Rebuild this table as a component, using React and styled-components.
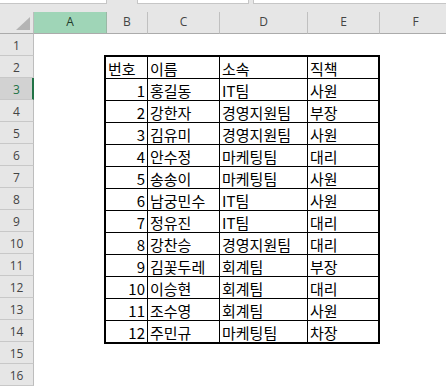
import React from 'react';
import styled, { createGlobalStyle } from 'styled-components';

const GlobalStyle = createGlobalStyle`
  html, body {
    margin: 0;
    padding: 0;
    background: #ffffff;
  }
  body {
    width: 446px;
    height: 386px;
    overflow: hidden;
  }
`;

const columns = [
  { name: 'A', width: 73, selected: true },
  { name: 'B', width: 41 },
  { name: 'C', width: 72 },
  { name: 'D', width: 88 },
  { name: 'E', width: 72 },
  { name: 'F', width: 72 },
];

const rowCount = 16;
const activeRow = 3;

const records = [
  [1, '홍길동', 'IT팀', '사원'],
  [2, '강한자', '경영지원팀', '부장'],
  [3, '김유미', '경영지원팀', '사원'],
  [4, '안수정', '마케팅팀', '대리'],
  [5, '송송이', '마케팅팀', '사원'],
  [6, '남궁민수', 'IT팀', '사원'],
  [7, '정유진', 'IT팀', '대리'],
  [8, '강찬승', '경영지원팀', '대리'],
  [9, '김꽃두레', '회계팀', '부장'],
  [10, '이승현', '회계팀', '대리'],
  [11, '조수영', '회계팀', '사원'],
  [12, '주민규', '마케팅팀', '차장'],
];

const Window = styled.div`
  width: 446px;
  height: 386px;
  overflow: hidden;
  background: #e6e6e6;
  display: flex;
  flex-direction: column;
`;

const TopStrip = styled.div`
  height: 14px;
  display: flex;
  align-items: flex-start;
`;

const BarBox = styled.div`
  height: 3px;
  background: #ffffff;
  border-bottom: 1px solid #c6c6c6;
  border-left: ${p => (p.$edge ? '1px solid #c6c6c6' : 'none')};
  border-right: ${p => (p.$end ? '1px solid #c6c6c6' : 'none')};
  width: ${p => (p.$w ? `${p.$w}px` : 'auto')};
  flex: ${p => (p.$w ? 'none' : '1')};
  margin-left: ${p => p.$gap || 0}px;
`;

const Sheet = styled.div`
  display: grid;
  grid-template-columns: 34px ${columns.map(c => `${c.width}px`).join(' ')};
  grid-template-rows: 22px repeat(${rowCount}, 22px);
  background: #ffffff;
  flex: 1;
`;

const Corner = styled.div`
  background: #e6e6e6;
  border-right: 1px solid #bdbdbd;
  border-bottom: 1px solid #ababab;
  position: relative;
  box-sizing: border-box;
`;

const CornerMark = styled.svg`
  position: absolute;
  left: 16px;
  top: 5px;
`;

const ColHead = styled.div`
  background: ${p => (p.$selected ? '#9fd5b7' : '#e6e6e6')};
  border-right: 1px solid ${p => (p.$selected ? '#9bb8a6' : '#c0c0c0')};
  border-bottom: 1px solid #ababab;
  box-sizing: border-box;
  display: flex;
  align-items: center;
  justify-content: center;
  padding-bottom: 2px;
  font-family: 'Open Sans', 'Noto Sans', sans-serif;
  font-size: 12px;
  color: ${p => (p.$selected ? '#1f3b2b' : '#444444')};
`;

const RowHead = styled.div`
  grid-column: 1;
  background: ${p => (p.$active ? '#d2d2d2' : '#e6e6e6')};
  border-right: ${p => (p.$active ? '2px solid #217346' : '1px solid #bdbdbd')};
  border-bottom: 1px solid #c8c8c8;
  box-sizing: border-box;
  display: flex;
  align-items: center;
  justify-content: center;
  padding-top: 1px;
  padding-left: ${p => (p.$active ? '1px' : '0')};
  font-family: 'Open Sans', 'Noto Sans', sans-serif;
  font-size: 12px;
  color: ${p => (p.$active ? '#217346' : '#444444')};
`;

const DataTable = styled.div`
  grid-column: 3 / 7;
  grid-row: 3 / 16;
  margin: -1px 0 -2px -3px;
  border: 2px solid #000000;
  box-sizing: border-box;
  display: grid;
  grid-template-columns: 42px 72px 88px 1fr;
  grid-template-rows: repeat(12, 22px) 1fr;
  background: #ffffff;
  z-index: 1;
`;

const Cell = styled.div`
  box-sizing: border-box;
  border-right: ${p => (p.$lastCol ? 'none' : '1px solid #000000')};
  border-bottom: ${p => (p.$lastRow ? 'none' : '1px solid #000000')};
  display: flex;
  align-items: center;
  justify-content: ${p => (p.$num ? 'flex-end' : 'flex-start')};
  padding: 2px 2px 0 2px;
  font-family: 'Noto Sans CJK KR', 'Noto Sans', sans-serif;
  font-size: 15px;
  line-height: 1;
  color: #000000;
  white-space: nowrap;
  overflow: hidden;
`;

const App = () => {
  const header = ['번호', '이름', '소속', '직책'];
  const rows = [header, ...records];

  return (
    <Window>
      <GlobalStyle />
      <TopStrip>
        <BarBox $w={106} $end />
        <BarBox $w={110} $gap={30} $edge $end />
        <BarBox $gap={4} $edge />
      </TopStrip>
      <Sheet>
        <Corner>
          <CornerMark width="14" height="13" viewBox="0 0 14 13">
            <polygon points="14,0 14,13 0,13" fill="#b4b4b4" />
          </CornerMark>
        </Corner>
        {columns.map(c => (
          <ColHead key={c.name} $selected={c.selected}>{c.name}</ColHead>
        ))}
        {Array.from({ length: rowCount }, (_, i) => (
          <RowHead key={i} $active={i + 1 === activeRow} style={{ gridRow: i + 2 }}>
            {i + 1}
          </RowHead>
        ))}
        <DataTable>
          {rows.map((r, ri) =>
            r.map((v, ci) => (
              <Cell
                key={`${ri}-${ci}`}
                $num={ri > 0 && ci === 0}
                $lastCol={ci === 3}
                $lastRow={ri === rows.length - 1}
              >
                {v}
              </Cell>
            ))
          )}
        </DataTable>
      </Sheet>
    </Window>
  );
};

export default App;
